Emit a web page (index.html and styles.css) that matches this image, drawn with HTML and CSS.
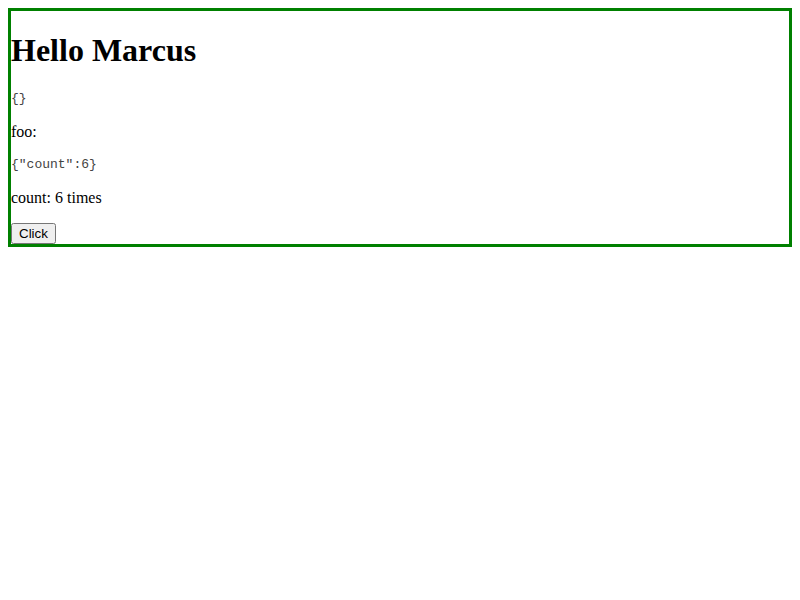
FILE: index.html
```html
<!DOCTYPE html>
<html>
<head>
<meta charset="utf-8">
<link rel="stylesheet" href="styles.css">
</head>
<body class="page">
<div class="app">
  <h1 class="title">Hello Marcus</h1>
  <pre class="dump">{}</pre>
  <p class="line">foo: </p>
  <pre class="dump">{"count":6}</pre>
  <p class="line">count: 6 times</p>
  <button class="btn">Click</button>
</div>
</body>
</html>
```
FILE: styles.css
```css
.page {
  margin: 8px;
  font-family: "Liberation Serif", "Times New Roman", serif;
  font-size: 16px;
  color: #000;
  background: #fff;
}
.app {
  border: 3px solid #008000;
}
.title {
  font-size: 32px;
  font-weight: bold;
  margin: 21.44px 0;
}
.dump {
  font-family: "Liberation Mono", "Courier New", monospace;
  font-size: 13px;
  line-height: 16px;
  color: #444;
  margin: 13px 0;
}
.line {
  margin: 16px 0;
}
.btn {
  font-family: "Liberation Sans", Arial, sans-serif;
  font-size: 13.33px;
  margin: 0;
  display: block;
}
```
